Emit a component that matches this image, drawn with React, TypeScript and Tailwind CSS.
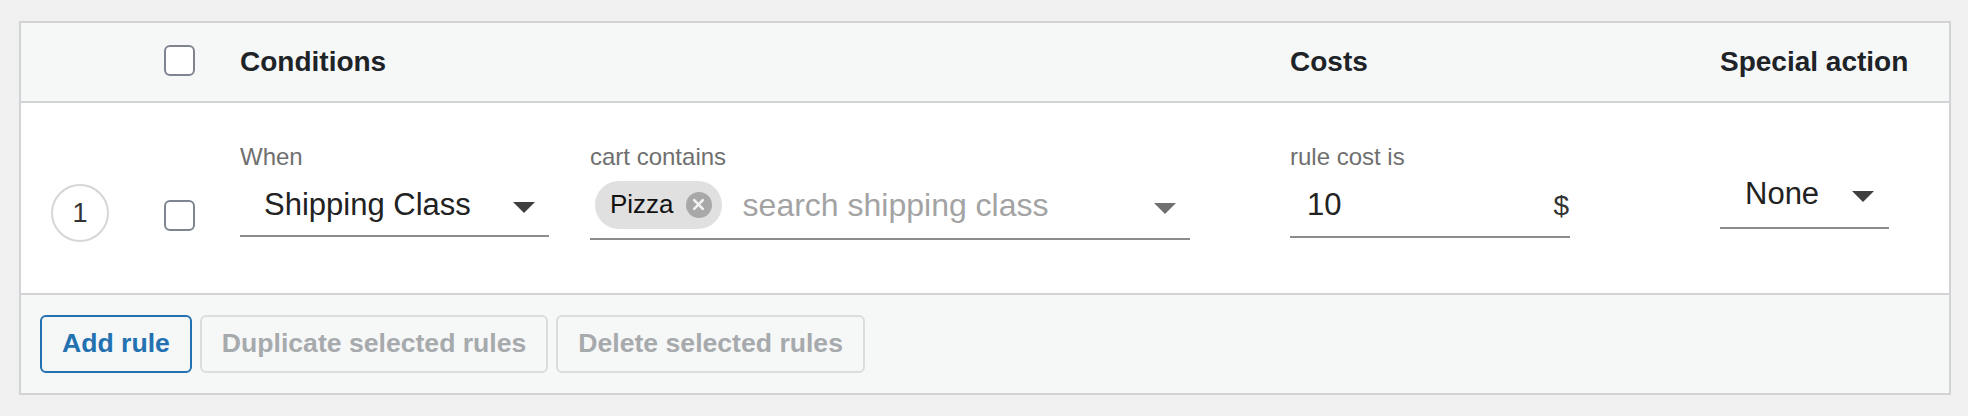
import React from "react";

const sans = "font-['Liberation_Sans',Arial,sans-serif]";

function Caret({ color = "#4a4a4a" }: { color?: string }) {
  return (
    <svg width="22" height="11" viewBox="0 0 10 5" className="shrink-0">
      <polygon points="0,0 10,0 5,5" fill={color} />
    </svg>
  );
}

function Checkbox() {
  return <span className="block h-[31px] w-[31px] rounded-[6px] border-2 border-[#7e8590] bg-white" />;
}

function Label({ children }: { children: React.ReactNode }) {
  return <div className="h-[28px] text-[24px] leading-[28px] text-[#6f6f6f]">{children}</div>;
}

export default function App() {
  return (
    <div className={`min-h-[416px] bg-[#f0f0f1] pb-[20px] pl-[19px] pr-[17px] pt-[21px] ${sans}`}>
      <div className="border-2 border-[#d2d3d6] bg-white">
        {/* header */}
        <div className="flex h-[80px] items-center border-b-2 border-[#d2d3d6] bg-[#f6f7f7] text-[28px] font-bold text-[#1d2327]">
          <div className="w-[143px]" />
          <div className="w-[76px] -translate-y-[2px]">
            <Checkbox />
          </div>
          <div className="w-[1050px]">Conditions</div>
          <div className="w-[430px]">Costs</div>
          <div className="flex-1">Special action</div>
        </div>

        {/* rule row */}
        <div className="flex h-[192px] items-start border-b-2 border-[#d2d3d6]">
          <div className="w-[143px] pl-[30px] pt-[81px]">
            <div className="flex h-[58px] w-[58px] items-center justify-center rounded-full border-2 border-[#d6d6d6] text-[27px] text-[#333]">
              1
            </div>
          </div>
          <div className="w-[76px] pt-[97px]">
            <Checkbox />
          </div>

          <div className="flex w-[1050px] gap-[41px] pt-[40px]">
            <div className="w-[309px]">
              <Label>When</Label>
              <div className="flex h-[66px] items-center border-b-2 border-[#8c8c8c] pl-[24px] pr-[14px]">
                <span className="flex-1 translate-y-[2px] text-[31px] leading-[36px] text-[#222]">Shipping Class</span>
                <span className="mt-[8px]">
                  <Caret color="#3f3f3f" />
                </span>
              </div>
            </div>
            <div className="w-[600px]">
              <Label>cart contains</Label>
              <div className="flex h-[69px] items-center border-b-2 border-[#8c8c8c] pl-[5px] pr-[14px]">
                <span className="flex h-[48px] items-center rounded-full bg-[#e0e0e0] pl-[15px] pr-[10px] text-[26px] text-[#111]">
                  Pizza
                  <span className="ml-[12px] flex h-[26px] w-[26px] items-center justify-center rounded-full bg-[#a8a8a8]">
                    <svg width="13" height="13" viewBox="0 0 12 12">
                      <path d="M2 2L10 10M10 2L2 10" stroke="#f2f2f2" strokeWidth="2.4" strokeLinecap="round" />
                    </svg>
                  </span>
                </span>
                <span className="ml-[21px] flex-1 text-[32px] leading-[36px] text-[#a3a3a3]">search shipping class</span>
                <span className="mt-[8px]">
                  <Caret color="#707070" />
                </span>
              </div>
            </div>
          </div>

          <div className="w-[430px] pt-[40px]">
            <div className="w-[280px]">
              <Label>rule cost is</Label>
              <div className="flex h-[67px] items-center border-b-2 border-[#8c8c8c] pl-[17px] pr-[1px]">
                <span className="flex-1 translate-y-[1px] text-[31px] leading-[36px] text-[#222]">10</span>
                <span className="mt-[4px] text-[28px] leading-[36px] text-[#333]">$</span>
              </div>
            </div>
          </div>

          <div className="flex-1 pt-[58px]">
            <div className="flex h-[68px] w-[169px] items-center border-b-2 border-[#8c8c8c] pl-[25px] pr-[15px]">
              <span className="flex-1 text-[31px] leading-[36px] text-[#222]">None</span>
              <span className="mt-[4px]">
                <Caret color="#3f3f3f" />
              </span>
            </div>
          </div>
        </div>

        {/* footer actions */}
        <div className="flex gap-[8px] bg-[#f6f7f7] px-[19px] pb-[20px] pt-[20px] text-[26.6px] font-bold">
          <button className="h-[58px] rounded-[6px] border-2 border-[#2271b1] bg-[#f6f7f7] px-[20px] text-[#2271b1]">
            Add rule
          </button>
          <button className="h-[58px] rounded-[6px] border-2 border-[#dcdcde] bg-[#f6f7f7] px-[20px] text-[#a7aaad]">
            Duplicate selected rules
          </button>
          <button className="h-[58px] rounded-[6px] border-2 border-[#dcdcde] bg-[#f6f7f7] px-[20px] text-[#a7aaad]">
            Delete selected rules
          </button>
        </div>
      </div>
    </div>
  );
}
